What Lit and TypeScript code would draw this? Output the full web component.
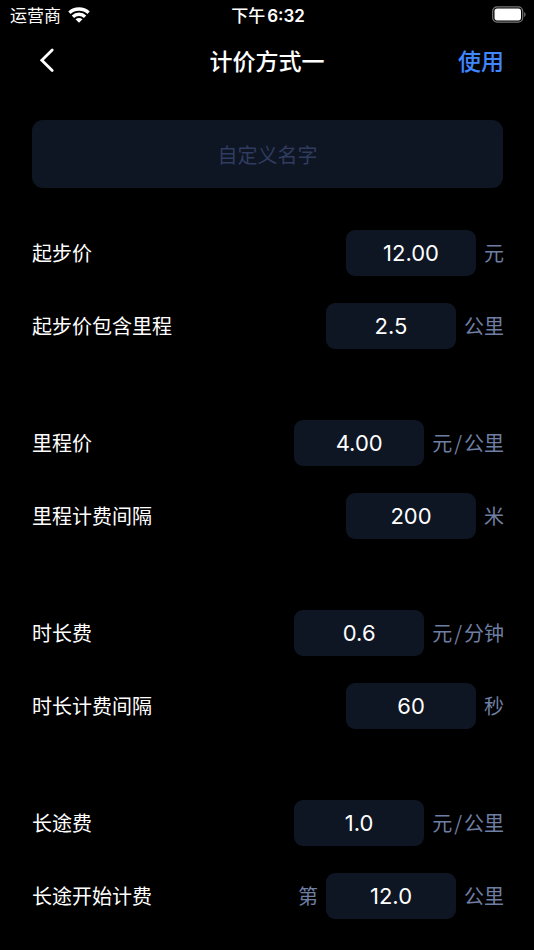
import { LitElement, html, css, nothing } from "lit";
import { customElement, property } from "lit/decorators.js";

interface Fare {
  id: string;
  label: string;
  value: string;
  unit: string;
  prefix?: string;
}

const groups: Fare[][] = [
  [
    { id: "base", label: "起步价", value: "12.00", unit: "元" },
    { id: "base-distance", label: "起步价包含里程", value: "2.5", unit: "公里" },
  ],
  [
    { id: "distance", label: "里程价", value: "4.00", unit: "元/公里" },
    { id: "distance-step", label: "里程计费间隔", value: "200", unit: "米" },
  ],
  [
    { id: "time", label: "时长费", value: "0.6", unit: "元/分钟" },
    { id: "time-step", label: "时长计费间隔", value: "60", unit: "秒" },
  ],
  [
    { id: "long", label: "长途费", value: "1.0", unit: "元/公里" },
    { id: "long-start", label: "长途开始计费", value: "12.0", unit: "公里", prefix: "第" },
  ],
];

@customElement("status-bar")
export class StatusBar extends LitElement {
  static styles = css`
    :host {
      display: grid;
      grid-template-columns: 1fr auto 1fr;
      align-items: center;
      height: 30px;
      padding: 0 8px 0 10px;
      font-size: 17px;
      line-height: 28px;
    }
    .carrier {
      display: flex;
      align-items: center;
      gap: 7px;
    }
    .time {
      display: flex;
      align-items: baseline;
      gap: 2px;
      font-weight: 500;
    }
    .clock {
      font-family: Inter, sans-serif;
      font-weight: 600;
    }
    .battery {
      justify-self: end;
    }
    svg {
      display: block;
    }
  `;

  render() {
    return html`
      <div class="carrier">
        <span>运营商</span>
        <svg width="22" height="16" viewBox="0 0 22 16" fill="none" stroke="#fff" stroke-width="3.4" aria-hidden="true">
          <path d="M1.4 5.7C6.8 .7 15.2 .7 20.6 5.7" />
          <path d="M4.9 9.7C8.3 6.5 13.7 6.5 17.1 9.7" />
          <path d="M11 15.8 7.5 12.3C9.5 10.6 12.5 10.6 14.5 12.3Z" fill="#fff" stroke="none" />
        </svg>
      </div>
      <div class="time"><span>下午</span><span class="clock">6:32</span></div>
      <svg class="battery" width="34" height="18" viewBox="0 0 34 18" aria-hidden="true">
        <rect x=".7" y=".8" width="30" height="15.4" rx="4.4" fill="none" stroke="#777" stroke-width="1.2" />
        <rect x="2.5" y="2.6" width="26.5" height="11.8" rx="2.6" fill="#fff" />
        <path d="M32.2 6C34 6.8 34 10.2 32.2 11Z" fill="#777" />
      </svg>
    `;
  }
}

@customElement("fare-row")
export class FareRow extends LitElement {
  @property({ attribute: false }) fare!: Fare;

  static styles = css`
    :host {
      display: flex;
      align-items: center;
      justify-content: space-between;
      font-size: 20px;
      line-height: 28px;
    }
    .field {
      display: flex;
      align-items: center;
      gap: 8px;
      color: #6f7fa3;
    }
    .value {
      box-sizing: border-box;
      width: 130px;
      height: 46px;
      padding: 0;
      border: 0;
      border-radius: 9px;
      background: #0e1523;
      color: #fff;
      font-family: Inter, sans-serif;
      font-size: 22px;
      text-align: center;
    }
    .unit {
      display: flex;
      gap: 2px;
    }
  `;

  render() {
    const { id, label, value, unit, prefix } = this.fare;
    const [money, per] = unit.split("/");
    return html`
      <label for=${id}>${label}</label>
      <div class="field">
        ${prefix ? html`<span>${prefix}</span>` : nothing}
        <input class="value" id=${id} type="text" inputmode="decimal" .value=${value} />
        <span class="unit"><span>${money}</span>${per ? html`<span>/</span><span>${per}</span>` : nothing}</span>
      </div>
    `;
  }
}

@customElement("app-root")
export class AppRoot extends LitElement {
  static styles = css`
    :host {
      display: block;
      min-height: 100vh;
      box-sizing: border-box;
      padding-bottom: 31px;
      background: #000;
      color: #fff;
      font-family: "Noto Sans CJK SC", Inter, sans-serif;
    }
    .nav {
      display: grid;
      grid-template-columns: 1fr auto 1fr;
      align-items: center;
      height: 60px;
      padding: 0 30px;
      line-height: 32px;
    }
    .title {
      margin: 0;
      font-size: 23px;
      font-weight: 500;
    }
    button {
      padding: 0;
      border: 0;
      background: none;
      font-family: inherit;
      line-height: inherit;
      cursor: pointer;
    }
    .back {
      justify-self: start;
      padding: 0 9px;
    }
    .back svg {
      display: block;
    }
    .use {
      justify-self: end;
      color: #3f86ff;
      font-size: 23px;
      font-weight: 500;
    }
    .name {
      padding: 30px 31px 42px 32px;
    }
    .name-input {
      display: block;
      box-sizing: border-box;
      width: 100%;
      height: 68px;
      border: 0;
      border-radius: 11px;
      background: #0e1523;
      color: #fff;
      font-family: inherit;
      font-size: 20px;
      text-align: center;
    }
    .name-input::placeholder {
      color: #2f3c5f;
      opacity: 1;
    }
    .groups {
      display: grid;
      gap: 71px;
      padding: 0 30px 0 32px;
    }
    .group {
      display: grid;
      gap: 27px;
    }
  `;

  render() {
    return html`
      <status-bar></status-bar>
      <header class="nav">
        <button class="back" type="button" aria-label="返回">
          <svg width="16" height="26" viewBox="0 0 16 26" fill="none" stroke="#fff" stroke-width="2.8" stroke-linecap="round">
            <path d="M13.2 3 2.8 13.2 13.2 23.6" />
          </svg>
        </button>
        <h1 class="title">计价方式一</h1>
        <button class="use" type="button">使用</button>
      </header>
      <main>
        <div class="name">
          <input class="name-input" type="text" placeholder="自定义名字" aria-label="自定义名字" />
        </div>
        <div class="groups">
          ${groups.map(
            (rows) => html`<section class="group">
              ${rows.map((fare) => html`<fare-row .fare=${fare}></fare-row>`)}
            </section>`
          )}
        </div>
      </main>
    `;
  }
}
